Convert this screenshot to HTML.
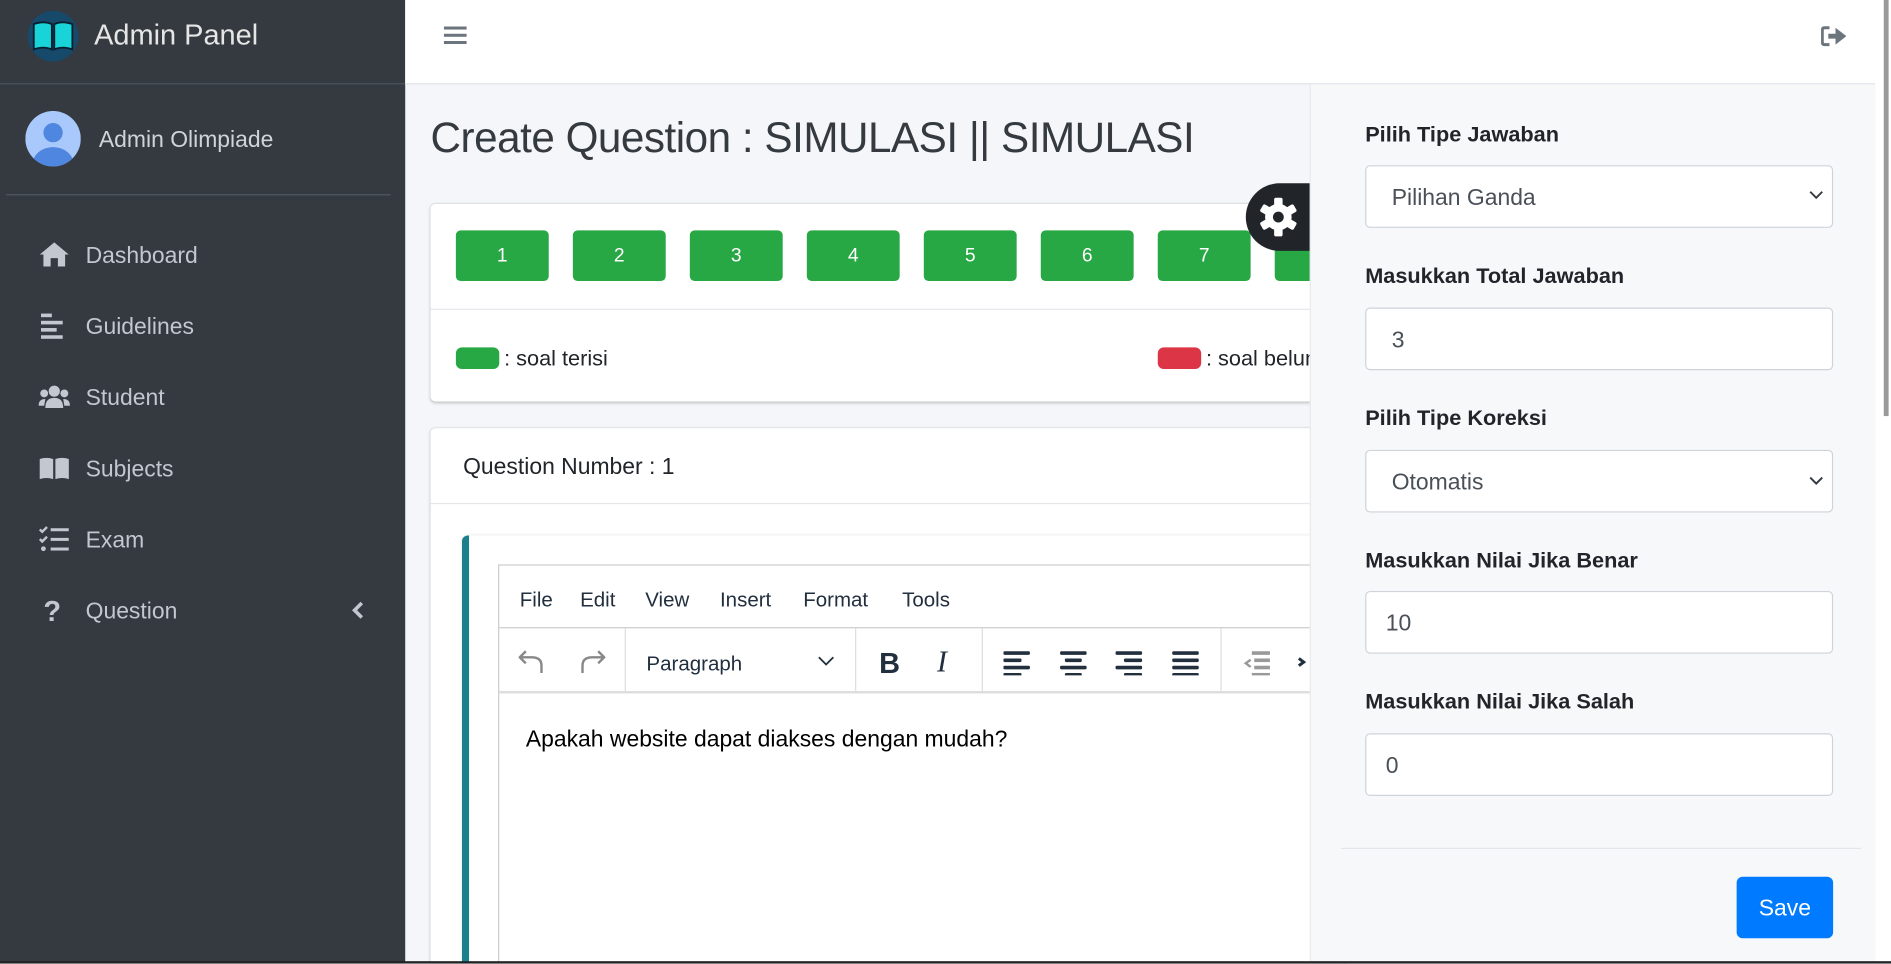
<!DOCTYPE html>
<html><head><meta charset="utf-8"><style>
html,body{margin:0;padding:0;width:1891px;height:963px;overflow:hidden;background:#f4f6f9}
#w{position:absolute;left:0;top:0;width:1568px;height:799px;transform:scale(1.206);transform-origin:0 0;font-family:"Liberation Sans",sans-serif;overflow:hidden;background:#f4f6f9}
.a{position:absolute}
.side{left:0;top:0;width:336px;height:799px;background:#343a40}
.mi{position:absolute;left:71px;font-size:19px;color:#c2c7d0;transform:translateY(-50%);margin-top:2px}
.ic{position:absolute;left:32px;width:26px;transform:translateY(-50%)}
.btn{position:absolute;top:191px;width:77px;height:42px;background:#28a745;border-radius:4px;color:#fff;font-size:16px;text-align:center;line-height:44px}
.lbl{position:absolute;left:1132px;font-size:18px;font-weight:bold;color:#212529;transform:translateY(-50%);margin-top:2px}
.inp{position:absolute;left:1132px;width:386px;height:50px;background:#fff;border:1px solid #ced4da;border-radius:4px;font-size:19px;color:#495057;line-height:54px;box-sizing:content-box}
.tm{position:absolute;top:498px;font-size:17px;color:#222f3e;transform:translateY(-50%)}
</style></head><body><div id="w">
<div class="a side"></div>
<svg class="a" style="left:22px;top:8px" width="44" height="44" viewBox="0 0 44 44"><circle cx="22" cy="22" r="21" fill="#17496b"/><path d="M6 12 Q14 9 21 12 V33 Q14 30 6 33Z" fill="#18d4d8" stroke="#0a1e2e" stroke-width="1.5"/><path d="M38 12 Q30 9 23 12 V33 Q30 30 38 33Z" fill="#18d4d8" stroke="#0a1e2e" stroke-width="1.5"/></svg>
<div class="a" style="left:78px;top:16px;font-size:24px;color:#e6e6e6;font-weight:300">Admin Panel</div>
<div class="a" style="left:0;top:69px;width:336px;height:1px;background:#4b545c"></div>
<svg class="a" style="left:21px;top:92px" width="46" height="46" viewBox="0 0 46 46"><defs><clipPath id="c"><circle cx="23" cy="23" r="23"/></clipPath></defs><circle cx="23" cy="23" r="23" fill="#a9c8fb"/><g clip-path="url(#c)" fill="#4f86e0"><circle cx="23" cy="18" r="8"/><ellipse cx="23" cy="44" rx="17" ry="14"/></g></svg>
<div class="a" style="left:82px;top:106px;font-size:19px;color:#d0d4da">Admin Olimpiade</div>
<div class="a" style="left:5px;top:161px;width:319px;height:1px;background:#4f5962"></div>
<svg class="ic" style="top:211px" width="26" height="22" viewBox="0 0 26 22"><path d="M13 1 L1 11 L4 11 L4 21 L10 21 L10 14 L16 14 L16 21 L22 21 L22 11 L25 11Z" fill="#c2c7d0"/></svg><div class="mi" style="top:211px">Dashboard</div>
<svg class="ic" style="top:270px" width="26" height="22" viewBox="0 0 26 22"><g fill="#c2c7d0"><rect x="2" y="1" width="9" height="3"/><rect x="2" y="7" width="18" height="3"/><rect x="2" y="13" width="13" height="3"/><rect x="2" y="19" width="18" height="3"/></g></svg><div class="mi" style="top:270px">Guidelines</div>
<svg class="ic" style="top:329px" width="28" height="22" viewBox="0 0 28 22"><g fill="#c2c7d0"><circle cx="14" cy="6" r="5"/><circle cx="5" cy="8" r="3.5"/><circle cx="23" cy="8" r="3.5"/><path d="M6 21 Q6 12 14 12 Q22 12 22 21Z"/><path d="M0 19 Q0 13 6 13 L5 19Z"/><path d="M28 19 Q28 13 22 13 L23 19Z"/></g></svg><div class="mi" style="top:329px">Student</div>
<svg class="ic" style="top:388px" width="28" height="22" viewBox="0 0 28 22"><path d="M1 3 Q7 1 13 3 V21 Q7 19 1 21Z M15 3 Q21 1 27 3 V21 Q21 19 15 21Z" fill="#c2c7d0"/></svg><div class="mi" style="top:388px">Subjects</div>
<svg class="ic" style="top:447px" width="26" height="22" viewBox="0 0 26 22"><g fill="none" stroke="#c2c7d0" stroke-width="2"><path d="M1 3 L3 5 L7 1 M1 11 L3 13 L7 9"/></g><g fill="#c2c7d0"><rect x="10" y="2" width="15" height="2.5"/><rect x="10" y="10" width="15" height="2.5"/><rect x="10" y="18" width="15" height="2.5"/><circle cx="4" cy="19" r="2"/></g></svg><div class="mi" style="top:447px">Exam</div>
<div class="a" style="left:36px;top:494px;font-size:24px;font-weight:bold;color:#c2c7d0">?</div><div class="mi" style="top:506px">Question</div>
<svg class="a" style="left:291px;top:499px" width="12" height="14" viewBox="0 0 12 14"><path d="M9 1 L3 7 L9 13" fill="none" stroke="#c2c7d0" stroke-width="3"/></svg>
<div class="a" style="left:336px;top:0;width:1232px;height:69px;background:#fff;border-bottom:1px solid #dee2e6"></div>
<svg class="a" style="left:368px;top:20px" width="19" height="18" viewBox="0 0 19 18"><g fill="#6c757d"><rect y="2" width="19" height="2.5"/><rect y="8" width="19" height="2.5"/><rect y="14" width="19" height="2.5"/></g></svg>
<svg class="a" style="left:1510px;top:21px" width="22" height="18" viewBox="0 0 22 18"><path d="M7 2 H3 Q1 2 1 4 V14 Q1 16 3 16 H7" fill="none" stroke="#6c757d" stroke-width="2.5"/><path d="M6 7 H12 V2 L21 9 L12 16 V11 H6Z" fill="#6c757d"/></svg>
<div class="a" style="left:357px;top:95px;font-size:35px;color:#343a40;letter-spacing:-0.4px">Create Question : SIMULASI || SIMULASI</div>
<div class="a" style="left:357px;top:169px;width:760px;height:164px;background:#fff;border-radius:4px;box-shadow:0 0 1px rgba(0,0,0,.15),0 1px 3px rgba(0,0,0,.2)"></div>
<div class="btn" style="left:378px">1</div><div class="btn" style="left:475px">2</div><div class="btn" style="left:572px">3</div><div class="btn" style="left:669px">4</div><div class="btn" style="left:766px">5</div><div class="btn" style="left:863px">6</div><div class="btn" style="left:960px">7</div><div class="btn" style="left:1057px">8</div>
<div class="a" style="left:357px;top:256px;width:760px;height:1px;background:#e5e7ea"></div>
<div class="a" style="left:378px;top:288px;width:36px;height:18px;background:#28a745;border-radius:5px"></div>
<div class="a" style="left:418px;top:287px;font-size:18px;color:#212529">: soal terisi</div>
<div class="a" style="left:960px;top:288px;width:36px;height:18px;background:#dc3545;border-radius:5px"></div>
<div class="a" style="left:1000px;top:287px;font-size:18px;color:#212529;white-space:nowrap">: soal belum terisi</div>
<div class="a" style="left:357px;top:355px;width:760px;height:444px;background:#fff;border-radius:4px 4px 0 0;box-shadow:0 0 1px rgba(0,0,0,.15),0 1px 3px rgba(0,0,0,.2)"></div>
<div class="a" style="left:384px;top:377px;font-size:19px;color:#212529">Question Number : 1</div>
<div class="a" style="left:357px;top:417px;width:760px;height:1px;background:#e5e7ea"></div>
<div class="a" style="left:383px;top:444px;width:734px;height:355px;border-left:6px solid #1b7f8c;border-radius:5px 0 0 0;background:#fff;box-shadow:0 0 2px rgba(0,0,0,.1)"></div>
<div class="a" style="left:413px;top:468px;width:700px;height:331px;border:1px solid #ccc;border-bottom:none;background:#fff"></div>
<div class="a" style="left:414px;top:520px;width:700px;height:1px;background:#ccc"></div>
<div class="a" style="left:414px;top:573px;width:700px;height:2px;background:#ddd"></div>
<div class="tm" style="left:431px">File</div><div class="tm" style="left:481px">Edit</div><div class="tm" style="left:535px">View</div><div class="tm" style="left:597px">Insert</div><div class="tm" style="left:666px">Format</div><div class="tm" style="left:748px">Tools</div>
<div class="a" style="left:518px;top:521px;width:1px;height:53px;background:#ddd"></div>
<div class="a" style="left:709px;top:521px;width:1px;height:53px;background:#ddd"></div>
<div class="a" style="left:814px;top:521px;width:1px;height:53px;background:#ddd"></div>
<div class="a" style="left:1012px;top:521px;width:1px;height:53px;background:#ddd"></div>
<svg class="a" style="left:430px;top:537px" width="72" height="24" viewBox="0 0 72 24"><g fill="none" stroke="#888" stroke-width="2"><path d="M6 3 L1 8 L6 13 M1 8 H11 Q19 8 19 15 V21"/><path d="M66 3 L71 8 L66 13 M71 8 H61 Q53 8 53 15 V21"/></g></svg>
<div class="a" style="left:536px;top:541px;font-size:17px;color:#222f3e">Paragraph</div>
<svg class="a" style="left:678px;top:543px" width="14" height="10" viewBox="0 0 14 10"><path d="M1 2 L7 8 L13 2" fill="none" stroke="#222f3e" stroke-width="1.5"/></svg>
<div class="a" style="left:729px;top:537px;font-size:24px;font-weight:bold;color:#222f3e">B</div>
<div class="a" style="left:777px;top:536px;font-size:25px;font-style:italic;font-family:'Liberation Serif',serif;color:#222f3e">I</div>
<svg class="a" style="left:832px;top:538px" width="165" height="22" viewBox="0 0 165 22"><g fill="#222f3e"><rect x="0" y="2" width="22" height="3" rx="1"/><rect x="0" y="8" width="15" height="3" rx="1"/><rect x="0" y="14" width="22" height="3" rx="1"/><rect x="0" y="20" width="15" height="2.5" rx="1"/>
<rect x="47" y="2" width="22" height="3" rx="1"/><rect x="51" y="8" width="14" height="3" rx="1"/><rect x="47" y="14" width="22" height="3" rx="1"/><rect x="51" y="20" width="14" height="2.5" rx="1"/>
<rect x="93" y="2" width="22" height="3" rx="1"/><rect x="100" y="8" width="15" height="3" rx="1"/><rect x="93" y="14" width="22" height="3" rx="1"/><rect x="100" y="20" width="15" height="2.5" rx="1"/>
<rect x="140" y="2" width="22" height="3" rx="1"/><rect x="140" y="8" width="22" height="3" rx="1"/><rect x="140" y="14" width="22" height="3" rx="1"/><rect x="140" y="20" width="22" height="2.5" rx="1"/></g></svg>
<svg class="a" style="left:1031px;top:538px" width="60" height="22" viewBox="0 0 60 22"><g fill="#999"><rect x="7" y="2" width="15" height="3"/><rect x="9" y="8" width="13" height="3"/><rect x="9" y="14" width="13" height="3"/><rect x="7" y="20" width="15" height="2.5"/></g><path d="M6 9 L2 12 L6 15" fill="none" stroke="#999" stroke-width="2"/><path d="M46 8 L50 11 L46 14" fill="none" stroke="#222f3e" stroke-width="2.5"/></svg>
<div class="a" style="left:436px;top:603px;font-size:19px;color:#000">Apakah website dapat diakses dengan mudah?</div>
<div class="a" style="left:1033px;top:152px;width:60px;height:56px;background:#212529;border-radius:28px 0 0 28px"></div>
<svg class="a" style="left:1043px;top:163px" width="34" height="34" viewBox="0 0 34 34"><g fill="#fff"><circle cx="17" cy="17" r="11"/><g id="t"><rect x="13.5" y="1" width="7" height="8" rx="1.5"/><rect x="13.5" y="25" width="7" height="8" rx="1.5"/></g><use href="#t" transform="rotate(60 17 17)"/><use href="#t" transform="rotate(120 17 17)"/></g><circle cx="17" cy="17" r="4.5" fill="#212529"/></svg>
<div class="a" style="left:1086px;top:70px;width:469px;height:729px;background:#f7f8fa;border-left:1px solid #e8e9ec"></div>
<div class="lbl" style="top:110px">Pilih Tipe Jawaban</div>
<div class="inp" style="top:137px"><span style="margin-left:21px">Pilihan Ganda</span></div>
<svg class="a" style="left:1500px;top:158px" width="12" height="8" viewBox="0 0 12 8"><path d="M1 1 L6 6 L11 1" fill="none" stroke="#343a40" stroke-width="1.6"/></svg>
<div class="lbl" style="top:227px">Masukkan Total Jawaban</div>
<div class="inp" style="top:255px"><span style="margin-left:21px">3</span></div>
<div class="lbl" style="top:345px">Pilih Tipe Koreksi</div>
<div class="inp" style="top:373px"><span style="margin-left:21px">Otomatis</span></div>
<svg class="a" style="left:1500px;top:395px" width="12" height="8" viewBox="0 0 12 8"><path d="M1 1 L6 6 L11 1" fill="none" stroke="#343a40" stroke-width="1.6"/></svg>
<div class="lbl" style="top:463px">Masukkan Nilai Jika Benar</div>
<div class="inp" style="top:490px"><span style="margin-left:16px">10</span></div>
<div class="lbl" style="top:580px">Masukkan Nilai Jika Salah</div>
<div class="inp" style="top:608px"><span style="margin-left:16px">0</span></div>
<div class="a" style="left:1112px;top:703px;width:431px;height:1px;background:#e3e5e8"></div>
<div class="a" style="left:1440px;top:727px;width:80px;height:51px;background:#007bff;border-radius:5px;color:#fff;font-size:19px;text-align:center;line-height:54px">Save</div>
<div class="a" style="left:1555px;top:0;width:13px;height:799px;background:#fff"></div>
<div class="a" style="left:1562px;top:0;width:4px;height:345px;background:#9a9a9a"></div>
<div class="a" style="left:0;top:797px;width:1568px;height:2px;background:#222"></div>
</div></body></html>
